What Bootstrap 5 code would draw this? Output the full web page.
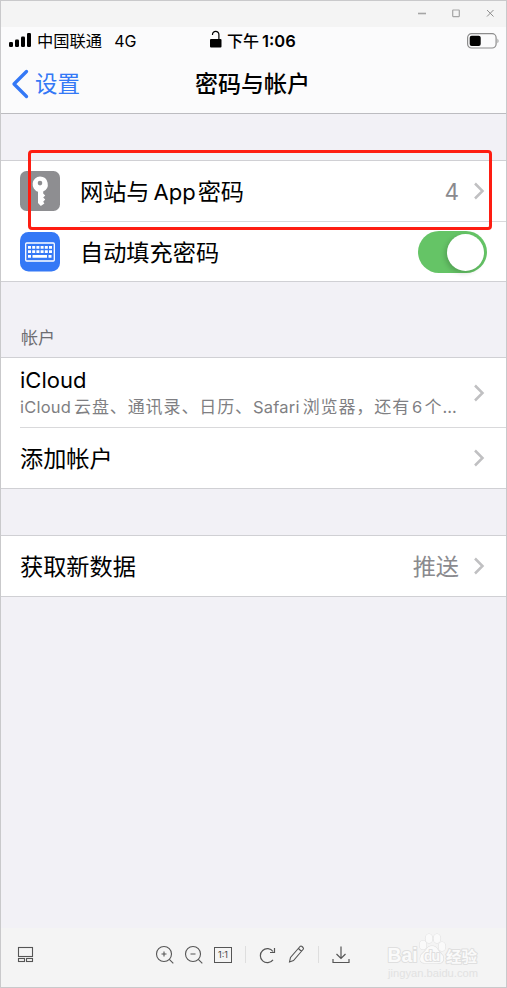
<!DOCTYPE html>
<html lang="zh-CN">
<head>
<meta charset="utf-8">
<meta name="viewport" content="width=device-width, initial-scale=1">
<title>密码与帐户</title>
<link href="https://cdn.jsdelivr.net/npm/bootstrap@5.3.0/dist/css/bootstrap.min.css" rel="stylesheet">
<style>
body{margin:0;background:#f4f4f4;font-family:Inter,"Noto Sans CJK SC",sans-serif;overflow:hidden}
svg{display:block;flex:none}
.viewer{width:507px;height:988px;border:1px solid #c9c9cb;background:#f2f1f6;color:#000}
.viewer div,.viewer span{white-space:nowrap}
.win-bar{height:26px;background:#f4f4f4;padding-right:10px;padding-bottom:2px}
.ios-top{height:87px;background:#fbfbfc;border-bottom:1px solid #bcbcc0}
.status{height:28px;font-size:16px;line-height:28px;padding-left:8px;padding-right:7px}
.carrier{width:201px}
.clock{font-weight:600}
.titlebar{height:58px;font-size:23px;line-height:58px}
.back{width:194px;color:#3478f6;padding-left:10px}
.group{background:#fff;border-top:1px solid #d0d0d4;border-bottom:1px solid #d0d0d4}
.cell{font-size:23.2px;color:#000;height:60px;line-height:58px}
.cell-sep{border-bottom:1px solid #d9d9db;height:61px}
.cell .inner{padding-right:21px}
.cell>span{padding-top:2px}
.latin{font-size:22px}
.tile{width:40px;margin-left:19px;margin-right:20px}
.value{color:#8a8a8e}
.section-label{font-size:17px;color:#6d6d72;line-height:24px;padding-left:20px;height:75px;padding-top:44px}
.detail{font-size:17px;line-height:24px;color:#7f7f83;letter-spacing:.9px}
.detail .latin{font-size:16.5px;letter-spacing:.2px}
.toggle{width:69px;height:42px;border-radius:21px;background:#65c466;padding:3px;margin-right:19px}
.knob{width:37px;height:37px;border-radius:50%;background:#fff;box-shadow:-2px 2px 5px rgba(0,0,0,.18)}
.highlight{left:28px;top:150px;width:464px;height:80px;border:3px solid #fe1d12;border-radius:4px}
.tools{height:59px;background:#f4f4f4;padding-left:16px;padding-bottom:6px}
.mark-text{font-family:"Liberation Sans","Noto Sans CJK SC",sans-serif}
</style>
</head>
<body>
<main class="viewer d-flex flex-column position-relative">
  <div class="win-bar d-flex justify-content-end align-items-center">
    <svg width="78" height="12" viewBox="0 0 78 12" fill="none" stroke="#a5a5a5"><path d="M0 6.500h8" stroke-width="1.600"/><rect x="34.700" y="3" width="6.600" height="6.600" rx=".5" stroke-width="1.200"/><path d="M69 3l6.500 6.500M75.500 3L69 9.500" stroke="#8e8e8e"/></svg>
  </div>
  <header class="ios-top">
    <div class="status d-flex align-items-center">
      <div class="carrier d-flex align-items-center">
        <svg style="margin-top:-2px" width="23" height="14" viewBox="0 0 23 14"><rect y="9" width="4" height="5" rx="1.200"/><rect x="6" y="6.500" width="4" height="7.500" rx="1.200"/><rect x="12" y="3.500" width="4" height="10.500" rx="1.200"/><rect x="18" y="0" width="4" height="14" rx="1.200"/></svg>
        <span style="margin-left:5px;font-size:16.300px">中国联通</span><span style="margin-left:12px">4G</span>
      </div>
      <svg style="margin-top:-4px" width="12" height="18" viewBox="0 0 12 18"><rect x="0" y="9" width="11.500" height="8.500" rx="1"/><path d="M2.500 5V4.500a3.200 3.200 0 0 1 6.400 0V9" fill="none" stroke="#000" stroke-width="1.200"/></svg>
      <div class="clock d-flex"><span style="margin-left:5px;font-weight:500">下午</span><span style="margin-left:3px;font-size:16.500px">1:06</span></div>
      <svg class="ms-auto" style="margin-top:-1px" width="32" height="16" viewBox="0 0 32 16"><rect x=".6" y=".7" width="28.500" height="14.300" rx="4" fill="none" stroke="#8c8c8c" stroke-width="1.200"/><rect x="2.700" y="2.700" width="11" height="10.300" rx="2"/><path d="M30.500 5.500q2 2.400 0 4.800z" fill="#8c8c8c"/></svg>
    </div>
    <div class="titlebar d-flex align-items-center">
      <div class="back d-flex align-items-center"><svg width="18" height="30" viewBox="0 0 18 30" fill="none" stroke="#3478f6" stroke-width="3.300" stroke-linecap="round" stroke-linejoin="round"><path d="M15.500 2.500L3 15l12.500 12.500"/></svg><span style="margin-left:6px;font-size:22.500px">设置</span></div>
      <div style="font-weight:500">密码与帐户</div>
    </div>
  </header>

  <section class="group" style="margin-top:46px">
    <div class="cell d-flex align-items-center">
      <svg class="tile" width="40" height="40" viewBox="0 0 40 40"><rect width="40" height="40" rx="6.500" fill="#8e8e91"/><path fill="#fff" fill-rule="evenodd" d="M20 5.500a7.800 7.800 0 0 1 3.200 14.900v2l2 2-2 2 2 2.200-2 2.200 1.200 1.700L20.800 35 18 32V20.700A7.800 7.800 0 0 1 20 5.500zm0 4.300a2.300 2.300 0 1 0 0 4.600 2.300 2.300 0 0 0 0-4.600z"/></svg>
      <div class="inner cell-sep flex-grow-1 d-flex align-items-center"><div class="d-flex flex-grow-1" style="padding-top:2px"><span>网站与</span><span class="latin" style="margin-left:4px">App</span><span style="margin-left:2px">密码</span><span class="value ms-auto" style="font-size:22.500px">4</span></div><svg style="margin-left:14px" width="12" height="18" viewBox="0 0 12 18" fill="none" stroke="#c0c0c2" stroke-width="2.500"><path d="M2 1.500L9.500 9 2 16.500"/></svg></div>
    </div>
    <div class="cell d-flex align-items-center">
      <svg class="tile" style="margin-top:2px" width="40" height="40" viewBox="0 0 40 40"><rect width="40" height="39.500" rx="8.500" fill="#3478f6"/><rect x="5.700" y="11" width="28.600" height="18" rx="1" fill="none" stroke="#fff" stroke-width="1.300"/><g stroke="#fff" stroke-width="2.700"><path d="M8 15.300h24M8 19.700h24" stroke-dasharray="3 1.200"/><path d="M8 24.300h3M12.500 24.300h14.500M28.500 24.300h3"/></g></svg>
      <span style="margin-top:2px">自动填充密码</span>
      <div class="toggle ms-auto d-flex justify-content-end align-items-center" style="margin-top:2px"><div class="knob"></div></div>
    </div>
  </section>

  <div class="section-label">帐户</div>
  <section class="group">
    <div class="d-flex" style="padding-left:19px">
      <div class="inner cell cell-sep flex-grow-1 d-flex align-items-center" style="height:70px;padding-right:21px">
        <div><div class="latin" style="line-height:28px">iCloud</div><div class="detail d-flex" style="margin-top:1px"><span class="latin">iCloud</span><span style="margin-left:3px">云盘、通讯录、日历、</span><span class="latin">Safari</span><span style="margin-left:3px">浏览器，还有</span><span class="latin" style="margin-left:2px">6</span><span style="margin-left:2px">个</span><span class="latin">…</span></div></div>
        <svg class="ms-auto" width="12" height="18" viewBox="0 0 12 18" fill="none" stroke="#c0c0c2" stroke-width="2.500"><path d="M2 1.500L9.500 9 2 16.500"/></svg>
      </div>
    </div>
    <div class="cell d-flex align-items-center" style="padding-left:19px;padding-right:21px"><span>添加帐户</span><svg class="ms-auto" width="12" height="18" viewBox="0 0 12 18" fill="none" stroke="#c0c0c2" stroke-width="2.500"><path d="M2 1.500L9.500 9 2 16.500"/></svg></div>
  </section>

  <section class="group" style="margin-top:46px">
    <div class="cell d-flex align-items-center" style="padding-left:19px;padding-right:21px"><span>获取新数据</span><span class="value ms-auto">推送</span><svg style="margin-left:14px" width="12" height="18" viewBox="0 0 12 18" fill="none" stroke="#c0c0c2" stroke-width="2.500"><path d="M2 1.500L9.500 9 2 16.500"/></svg></div>
  </section>

  <footer class="tools d-flex align-items-center mt-auto">
    <svg width="18" height="18" viewBox="0 0 18 18" fill="none" stroke="#555" stroke-width="1.100"><rect x="1.500" y="1.500" width="14" height="9"/><rect x="1.500" y="12.500" width="6" height="3"/><rect x="9.500" y="12.500" width="6" height="3"/></svg>
    <svg style="margin-left:120px" width="20" height="20" viewBox="0 0 20 20" fill="none" stroke="#555" stroke-width="1.100"><circle cx="9" cy="9" r="7.500"/><path d="M14.300 14.300l4 4M6.500 9h5M9 6.500v5"/></svg>
    <svg style="margin-left:9px" width="20" height="20" viewBox="0 0 20 20" fill="none" stroke="#555" stroke-width="1.100"><circle cx="9" cy="9" r="7.500"/><path d="M14.300 14.300l4 4M6.500 9h5"/></svg>
    <div class="d-flex justify-content-center align-items-center" style="margin-left:10px;width:18px;height:16px;border:1px solid #555;font-size:9px;line-height:14px;color:#444">1:1</div>
    <div style="width:1px;height:17px;background:#dedede;margin-left:13px"></div>
    <svg style="margin-left:12px" width="19" height="20" viewBox="0 0 19 20" fill="none" stroke="#555" stroke-width="1.200"><path d="M15 14.800A7 7 0 1 1 15 6.500M16.500 3v4.500H12"/></svg>
    <svg style="margin-left:11px" width="17" height="20" viewBox="0 0 17 20" fill="none" stroke="#555" stroke-width="1.100"><path d="M1.500 17l1-4.500 9.500-11q1-1 2 0l1 1q1 1 0 2L5.500 15.500zM10.500 3.500l3 3"/></svg>
    <div style="width:1px;height:17px;background:#dedede;margin-left:13px"></div>
    <svg style="margin-left:13px" width="18" height="20" viewBox="0 0 18 20" fill="none" stroke="#555" stroke-width="1.200"><path d="M9 1.500v12M4.500 9L9 13.500 13.500 9M1 14v3.500h16V14"/></svg>
    <svg class="mark-text" style="margin-left:36px;margin-top:-2px" width="96" height="50" viewBox="0 0 96 50" fill="#fafafa" stroke="#dfdfdf" stroke-width="2" paint-order="stroke" stroke-linejoin="round"><g stroke-width="1.200"><ellipse cx="37" cy="16" rx="3.500" ry="4.500"/><ellipse cx="43" cy="9.500" rx="3.500" ry="4.500"/><ellipse cx="51" cy="9.500" rx="3.500" ry="4.500"/><ellipse cx="56" cy="17.500" rx="3.500" ry="4.500"/><path d="M46 17q4 0 6 4l5 6q2 8-6 7H39q-7 0-4-8l5-5q2-4 6-4z"/></g><text x="1.500" y="33" font-size="19.500" font-weight="700" textLength="30" lengthAdjust="spacingAndGlyphs">Bai</text><text x="38" y="32" font-size="14" font-weight="700" textLength="16">du</text><text x="60" y="32.500" font-size="15" font-weight="700" textLength="31" lengthAdjust="spacingAndGlyphs">经验</text><text x="2" y="47.500" font-size="10" fill="#e2e2e2" stroke="none" textLength="90" lengthAdjust="spacingAndGlyphs">jingyan.baidu.com</text></svg>
  </footer>
  <div class="highlight position-absolute" style="margin:-1px"></div>
</main>
<script src="https://cdn.jsdelivr.net/npm/bootstrap@5.3.0/dist/js/bootstrap.bundle.min.js"></script>
</body>
</html>
